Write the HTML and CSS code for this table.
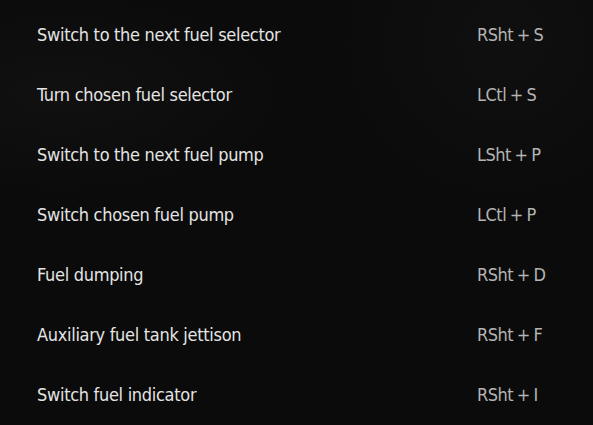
FILE: index.html
```html
<!DOCTYPE html>
<html>
<head>
<meta charset="utf-8">
<link rel="stylesheet" href="styles.css">
</head>
<body>
<div class="list">
  <div class="row"><span class="label">Switch to the next fuel selector</span><span class="key">RSht + S</span></div>
  <div class="row"><span class="label">Turn chosen fuel selector</span><span class="key">LCtl + S</span></div>
  <div class="row"><span class="label">Switch to the next fuel pump</span><span class="key">LSht + P</span></div>
  <div class="row"><span class="label">Switch chosen fuel pump</span><span class="key">LCtl + P</span></div>
  <div class="row"><span class="label">Fuel dumping</span><span class="key">RSht + D</span></div>
  <div class="row"><span class="label">Auxiliary fuel tank jettison</span><span class="key">RSht + F</span></div>
  <div class="row"><span class="label">Switch fuel indicator</span><span class="key">RSht + I</span></div>
</div>
</body>
</html>
```
FILE: styles.css
```css
html, body {
  margin: 0;
  padding: 0;
  height: 100%;
}
body {
  background:
    radial-gradient(ellipse 40% 25% at 10% 22%, rgba(255,255,255,0.025), transparent),
    radial-gradient(ellipse 30% 40% at 85% 10%, rgba(255,255,255,0.02), transparent),
    #0b0b0b;
  font-family: "DejaVu Sans Condensed", "DejaVu Sans", sans-serif;
  overflow: hidden;
}
.list {
  display: flex;
  flex-direction: column;
  padding-top: 4px;
}
.row {
  display: grid;
  grid-template-columns: 440px 1fr;
  height: 60px;
  align-items: center;
  padding-left: 37px;
  font-size: 18px;
  letter-spacing: -0.3px;
}
.label {
  color: #e4e4e4;
}
.key {
  color: #b4b4b4;
  letter-spacing: -0.5px;
  word-spacing: -1px;
}
```
